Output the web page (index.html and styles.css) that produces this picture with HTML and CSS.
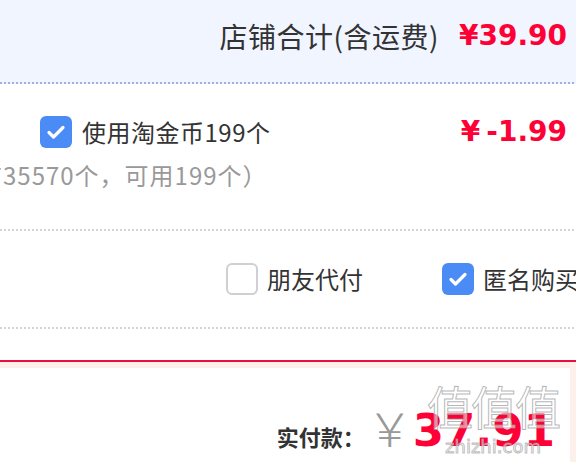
FILE: index.html
```html
<!DOCTYPE html>
<html lang="zh">
<head>
<meta charset="utf-8">
<link rel="stylesheet" href="styles.css">
</head>
<body>
<div class="page">
  <div class="shop-total">
    <span class="total-label">店铺合计(含运费)</span>
    <span class="total-price">¥39.90</span>
  </div>
  <div class="dots dots-blue"></div>

  <div class="coin-section">
    <div class="coin-row">
      <span class="cb cb-on"><svg viewBox="0 0 32 32" width="32" height="32"><path d="M9 16.5 L13.5 21 L23 11.5" fill="none" stroke="#fff" stroke-width="3.2" stroke-linecap="round" stroke-linejoin="round"/></svg></span>
      <span class="coin-text">使用淘金币199个</span>
      <span class="coin-price">¥<span class="minus">-1.99</span></span>
    </div>
    <div class="coin-note">（共有35570个，可用199个）</div>
  </div>
  <div class="dots dots-gray"></div>

  <div class="option-row">
    <span class="cb cb-off"></span>
    <span class="opt-text">朋友代付</span>
    <span class="cb cb-on opt-second"><svg viewBox="0 0 32 32" width="32" height="32"><path d="M9 16.5 L13.5 21 L23 11.5" fill="none" stroke="#fff" stroke-width="3.2" stroke-linecap="round" stroke-linejoin="round"/></svg></span>
    <span class="opt-text">匿名购买</span>
  </div>
  <div class="dots dots-gray"></div>

  <div class="spacer"></div>
  <div class="pay-area">
    <div class="pay-card">
      <span class="pay-label">实付款：</span>
      <span class="pay-yen">￥</span>
      <span class="pay-amount">37.91</span>
      <div class="watermark">
        <span class="wm-big">值值值</span>
        <span class="wm-small">zhizhi.com</span>
      </div>
    </div>
  </div>
</div>
</body>
</html>
```

FILE: styles.css
```css
html, body {
  margin: 0;
  padding: 0;
  background: #fff;
}
.page {
  width: 576px;
  height: 462px;
  overflow: hidden;
  font-family: "Noto Sans CJK SC", "Noto Sans", sans-serif;
  color: #333;
}
.shop-total {
  height: 82px;
  box-sizing: border-box;
  background: #f1f5ff;
  display: flex;
  align-items: center;
  justify-content: flex-end;
  padding: 0 9px 11px 0;
}
.total-label {
  font-size: 28px;
  letter-spacing: 0.5px;
  color: #333;
  line-height: 1;
}
.total-price {
  margin-left: 20px;
  font-family: "DejaVu Sans", sans-serif;
  font-weight: bold;
  font-size: 28px;
  color: #ff0036;
  line-height: 1;
}
.dots {
  height: 2px;
}
.dots-blue {
  background: repeating-linear-gradient(to right, #a3aee4 0 2px, #f1f5ff 2px 4px);
}
.dots-gray {
  background: repeating-linear-gradient(to right, #d4d4d4 0 2px, #fff 2px 4px);
}
.coin-section {
  height: 145px;
  overflow: hidden;
  padding-top: 32px;
  box-sizing: border-box;
}
.coin-row {
  display: flex;
  align-items: center;
  padding: 0 9px 0 40px;
  height: 32px;
}
.cb {
  width: 32px;
  height: 32px;
  box-sizing: border-box;
  border-radius: 6px;
  flex: none;
  display: block;
}
.cb svg {
  display: block;
}
.cb-on {
  background: #4b8bf5;
}
.cb-off {
  border: 2px solid #cfcfd4;
  background: #fff;
}
.coin-text {
  margin-left: 10px;
  font-size: 24px;
  letter-spacing: 0.5px;
  line-height: 1;
  color: #333;
}
.coin-price {
  margin-left: auto;
  font-family: "DejaVu Sans", sans-serif;
  font-weight: bold;
  font-size: 28px;
  color: #ff0036;
  line-height: 1;
}
.minus {
  margin-left: 6px;
}
.coin-note {
  margin: 15px 0 0 -72px;
  font-size: 24px;
  letter-spacing: 1px;
  line-height: 1;
  color: #999;
  white-space: nowrap;
}
.option-row {
  height: 96px;
  display: flex;
  align-items: center;
  padding-left: 226px;
  white-space: nowrap;
}
.opt-text {
  margin-left: 9px;
  font-size: 24px;
  line-height: 1;
  color: #333;
}
.opt-second {
  margin-left: 79px;
}
.spacer {
  height: 31px;
  border-bottom: 2px solid #e8103f;
}
.pay-area {
  background: #fdf0ea;
  padding: 6px 6px 0 0;
  height: 100px;
  box-sizing: border-box;
}
.pay-card {
  position: relative;
  background: #fff;
  height: 100%;
  display: flex;
  align-items: baseline;
  justify-content: flex-end;
  padding: 25px 15px 0 0;
  box-sizing: border-box;
}
.pay-label {
  font-size: 22px;
  font-weight: bold;
  color: #333;
}
.pay-yen {
  margin-left: 2px;
  font-size: 46px;
  color: #999;
  font-weight: 300;
}
.pay-amount {
  margin-left: 0;
  font-family: "DejaVu Sans", sans-serif;
  font-weight: bold;
  font-size: 45px;
  color: #ff0036;
  line-height: 1;
}
.watermark {
  position: absolute;
  left: 422px;
  top: 14px;
  width: 142px;
  display: flex;
  flex-direction: column;
  align-items: center;
  pointer-events: none;
}
.wm-big {
  font-size: 46px;
  line-height: 1;
  letter-spacing: -2px;
  color: rgba(255, 255, 255, 0.55);
  -webkit-text-stroke: 1px rgba(150, 150, 150, 0.7);
}
.wm-small {
  font-family: "DejaVu Sans", sans-serif;
  font-size: 18px;
  line-height: 1;
  margin-top: 10px;
  color: rgba(255, 255, 255, 0.6);
  -webkit-text-stroke: 1px rgba(150, 150, 150, 0.6);
}
```
